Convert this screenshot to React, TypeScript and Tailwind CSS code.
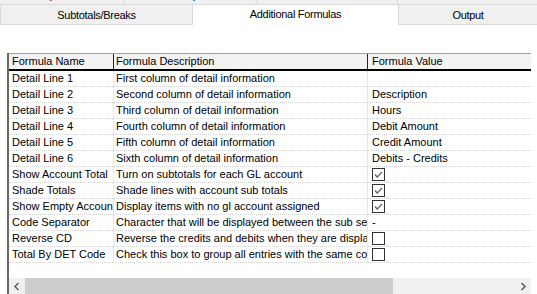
import React from "react";

type Row = { name: string; desc: string; value?: string; check?: boolean };

const rows: Row[] = [
  { name: "Detail Line 1", desc: "First column of detail information", value: "" },
  { name: "Detail Line 2", desc: "Second column of detail information", value: "Description" },
  { name: "Detail Line 3", desc: "Third column of detail information", value: "Hours" },
  { name: "Detail Line 4", desc: "Fourth column of detail information", value: "Debit Amount" },
  { name: "Detail Line 5", desc: "Fifth column of detail information", value: "Credit Amount" },
  { name: "Detail Line 6", desc: "Sixth column of detail information", value: "Debits - Credits" },
  { name: "Show Account Total", desc: "Turn on subtotals for each GL account", check: true },
  { name: "Shade Totals", desc: "Shade lines with account sub totals", check: true },
  { name: "Show Empty Accounts", desc: "Display items with no gl account assigned", check: true },
  { name: "Code Separator", desc: "Character that will be displayed between the sub segments", value: "-" },
  { name: "Reverse CD", desc: "Reverse the credits and debits when they are displayed", check: false },
  { name: "Total By DET Code", desc: "Check this box to group all entries with the same code", check: false },
];

function CheckBox({ checked }: { checked: boolean }) {
  return (
    <div className="w-[13px] h-[13px] border border-[#333333] bg-white flex items-center justify-center">
      {checked && (
        <svg width="11" height="11" viewBox="0 0 11 11">
          <path d="M2 5.5 L4.3 8 L9 2.8" fill="none" stroke="#5a5a5a" strokeWidth="1.2" />
        </svg>
      )}
    </div>
  );
}

export default function App() {
  return (
    <div
      className="w-[537px] h-[294px] bg-white overflow-hidden flex flex-col text-black"
      style={{ fontFamily: '"Liberation Sans", Arial, sans-serif' }}
    >
      {/* top tab row (mostly hidden) */}
      <div className="flex h-[5px] overflow-hidden items-end border-b border-[#d9d9d9] bg-[#f0f0f0] text-[11px] tracking-[-0.3px] shrink-0">
        <div className="w-[124px] h-[17px] shrink-0 border-r border-[#d9d9d9] flex items-center justify-center">Report Info</div>
        <div className="w-[134px] h-[17px] shrink-0 border-r border-[#d9d9d9] flex items-center justify-center">Print Options</div>
        <div className="w-[140px] h-[17px] shrink-0 border-r border-[#d9d9d9] flex items-center justify-center">Date Selection</div>
        <div className="flex-1 h-[17px] flex items-center justify-center">Data Selection</div>
      </div>
      {/* second tab row */}
      <div className="flex h-[20px] shrink-0 text-[11px] tracking-[-0.3px]">
        <div className="w-[193px] shrink-0 bg-[#f0f0f0] border-r border-b border-l border-[#d9d9d9] flex items-center justify-center pt-[1px]">
          Subtotals/Breaks
        </div>
        <div className="w-[205px] shrink-0 bg-white flex items-center justify-center pb-[1px]">
          Additional Formulas
        </div>
        <div className="flex-1 bg-[#f0f0f0] border-l border-b border-[#d9d9d9] flex items-center justify-center pt-[1px]">
          Output
        </div>
      </div>

      {/* grid */}
      <div className="mt-[28px] ml-[7px] w-[524px] flex-1 border-l-2 border-[#6a6a6a] flex flex-col text-[11px]">
        <div className="h-[18px] shrink-0 flex bg-[#f3f3f3] border-t border-[#a0a0a0] border-b-2 border-b-black">
          <div className="w-[105px] shrink-0 border-r border-[#222222] pl-[3px] flex items-center">Formula Name</div>
          <div className="w-[254px] shrink-0 border-r border-[#222222] pl-[2px] flex items-center">Formula Description</div>
          <div className="flex-1 pl-[4px] flex items-center">Formula Value</div>
        </div>
        {rows.map((r) => (
          <div key={r.name} className="h-[16px] shrink-0 flex border-b border-dotted border-[#d4d4d4]">
            <div className="w-[105px] shrink-0 border-r border-dotted border-[#d4d4d4] pl-[3px] flex items-center overflow-hidden whitespace-nowrap">
              {r.name}
            </div>
            <div className="w-[254px] shrink-0 border-r border-dotted border-[#d4d4d4] pl-[2px] flex items-center overflow-hidden whitespace-nowrap">
              {r.desc}
            </div>
            <div className="flex-1 pl-[4px] flex items-center overflow-hidden whitespace-nowrap">
              {r.check !== undefined ? <CheckBox checked={r.check} /> : r.value}
            </div>
          </div>
        ))}
        <div className="flex-1" />
        <div className="h-[16px] shrink-0 flex bg-[#f0f0f0]">
          <div className="w-[16px] shrink-0 flex items-center justify-center">
            <svg width="8" height="9" viewBox="0 0 8 9">
              <path d="M5.5 1 L2 4.5 L5.5 8" fill="none" stroke="#606060" strokeWidth="1.6" />
            </svg>
          </div>
          <div className="w-[368px] shrink-0 bg-[#cdcdcd]" />
          <div className="flex-1" />
          <div className="w-[16px] shrink-0 flex items-center justify-center">
            <svg width="8" height="9" viewBox="0 0 8 9">
              <path d="M2.5 1 L6 4.5 L2.5 8" fill="none" stroke="#606060" strokeWidth="1.6" />
            </svg>
          </div>
        </div>
      </div>
    </div>
  );
}
